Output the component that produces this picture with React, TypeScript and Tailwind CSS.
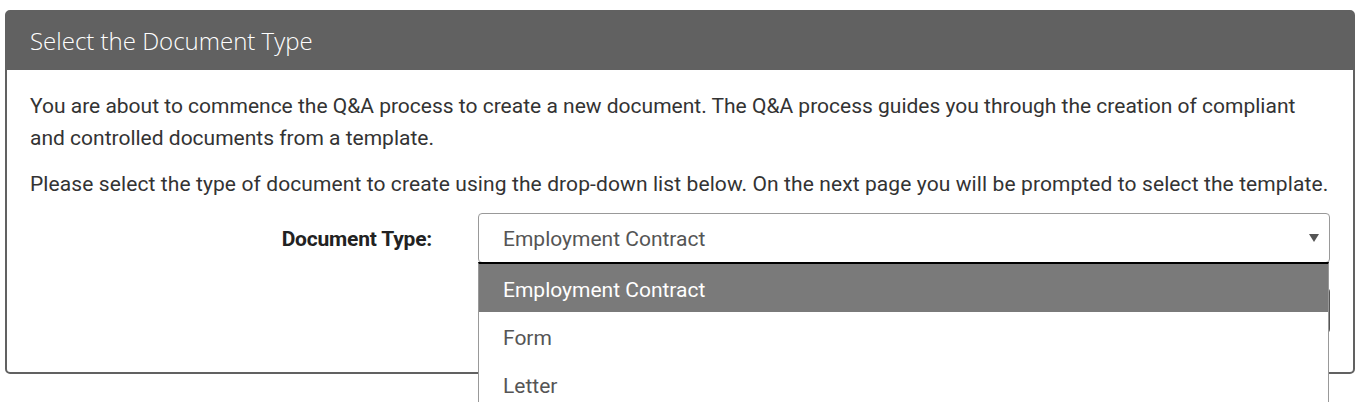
import { useState } from "react";

const OPTIONS = ["Employment Contract", "Form", "Letter"];

const App = () => {
  const [selected, setSelected] = useState(OPTIONS[0]);

  return (
    <div className="min-h-[402px] bg-white pt-[10px] px-[5px] font-['Roboto',sans-serif] text-[#333]">
      <div className="w-[1350px] rounded-[5px] border-2 border-[#616161]">
        {/* Header */}
        <div className="flex h-[58px] items-center bg-[#616161] px-[23px]">
          <h2 className="font-['Open_Sans',sans-serif] text-[24px] font-light text-white">
            Select the Document Type
          </h2>
        </div>

        {/* Body */}
        <div className="px-[23px] pt-[20px] pb-[39px] text-[21px]">
          <p className="leading-[32px]">
            You are about to commence the Q&amp;A process to create a new document. The Q&amp;A process guides you through
            the creation of compliant and controlled documents from a template.
          </p>
          <p className="mt-[14px] whitespace-nowrap leading-[32px] tracking-[0.1px]">
            Please select the type of document to create using the drop-down list below. On the next page you will be
            prompted to select the template.
          </p>

          <div className="mt-[13px] flex items-center">
            <label className="w-[402px] pt-[3px] text-right font-bold tracking-[-0.2px] text-[#222]">Document Type:</label>
            <div className="relative ml-[46px] flex-1">
              <div className="flex h-[50px] items-center justify-between rounded-[4px] border border-[#999] px-[24px] pr-[10px] text-[#555]">
                <span className="pt-[3px]">{selected}</span>
                <svg width="10" height="8" viewBox="0 0 10 8">
                  <path d="M0 0h10L5 8z" fill="#555" />
                </svg>
              </div>

              {/* Open list */}
              <ul className="absolute left-0 top-[49px] z-10 w-[851px] border-x border-t-2 border-x-[#999] border-t-black bg-white">
                {OPTIONS.map((opt) => (
                  <li
                    key={opt}
                    onClick={() => setSelected(opt)}
                    className={`flex h-[48px] items-center px-[24px] pt-[5px] ${
                      opt === selected ? "bg-[#7a7a7a] text-white" : "text-[#555]"
                    }`}
                  >
                    {opt}
                  </li>
                ))}
              </ul>
            </div>
          </div>

          <div className="mt-[25px] flex justify-end">
            <button className="h-[45px] rounded-[4px] bg-[#555] px-[30px] text-white">Next</button>
          </div>
        </div>
      </div>
    </div>
  );
};

export default App;
